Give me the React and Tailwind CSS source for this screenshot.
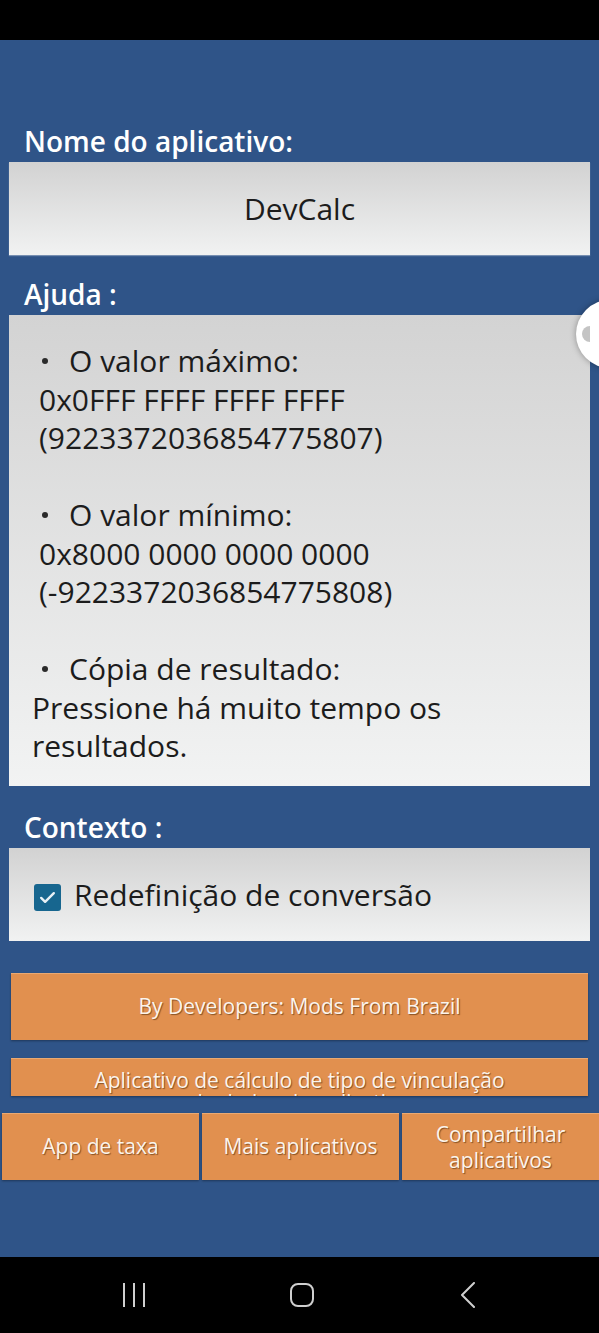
import React from 'react';

const helpBlocks = [
  { title: 'O valor máximo:', lines: ['0x0FFF FFFF FFFF FFFF', '(9223372036854775807)'], indent: true },
  { title: 'O valor mínimo:', lines: ['0x8000 0000 0000 0000', '(-9223372036854775808)'], indent: true },
  { title: 'Cópia de resultado:', lines: ['Pressione há muito tempo os', 'resultados.'], indent: false },
];

function Label({ children, className = '' }) {
  return (
    <div className={`px-[24px] mb-[3px] text-[28px] leading-[36px] font-semibold text-white ${className}`}>
      {children}
    </div>
  );
}

function OrangeButton({ children, className = '' }) {
  return (
    <button
      className={`bg-[#e1904f] text-[#fbf4ec] text-[21px] [text-shadow:1px_1px_1px_rgba(60,30,0,0.55)] shadow-[0_1px_2px_rgba(0,0,0,0.35)] border-t border-[#eaa972] ${className}`}
    >
      {children}
    </button>
  );
}

export default function App() {
  return (
    <div className="relative w-[599px] h-[1333px] overflow-hidden bg-black flex flex-col font-['Open_Sans',sans-serif]">
      {/* status bar */}
      <div className="h-[40px] shrink-0 bg-black" />

      <main className="flex-1 bg-[#2f5488] flex flex-col pt-[83px]">
        <Label>Nome do aplicativo:</Label>
        <div className="mx-[9px] h-[93px] bg-gradient-to-b from-[#d2d2d2] to-[#f1f2f2] flex items-center justify-center text-[30px] font-medium text-[#1c1c1c] shadow-[0_1px_1px_rgba(255,255,255,0.35)]">
          DevCalc
        </div>

        <Label className="mt-[21px]">Ajuda :</Label>
        <div className="mx-[9px] h-[471px] bg-gradient-to-b from-[#d3d3d3] to-[#f2f3f3] pt-[27px] pl-[23px] text-[30px] font-medium leading-[38.5px] text-[#1c1c1c]">
          {helpBlocks.map((block, i) => (
            <div key={block.title} className={i > 0 ? 'mt-[38.5px]' : ''}>
              <div className="flex items-center whitespace-nowrap">
                <span className="ml-[10px] w-[6px] h-[6px] rounded-full bg-[#2a2a2a]" />
                <span className="ml-[21px]">{block.title}</span>
              </div>
              {block.lines.map((line) => (
                <div key={line} className={`whitespace-nowrap ${block.indent ? 'pl-[7px]' : ''}`}>
                  {line}
                </div>
              ))}
            </div>
          ))}
        </div>

        <Label className="mt-[23px]">Contexto :</Label>
        <div className="mx-[9px] h-[93px] bg-gradient-to-b from-[#d2d2d2] to-[#f1f2f2] flex items-center pl-[25px] text-[30px] font-medium text-[#1c1c1c]">
          <span className="w-[27px] h-[27px] rounded-[3px] bg-[#17668f] flex items-center justify-center mt-[6px]">
            <svg width="19" height="19" viewBox="0 0 24 24" fill="none" stroke="#e8f1f6" strokeWidth="3" strokeLinecap="round" strokeLinejoin="round">
              <path d="M4 12.5l5 5L20 6.5" />
            </svg>
          </span>
          <span className="ml-[13px]">Redefinição de conversão</span>
        </div>

        <OrangeButton className="mt-[32px] mx-[11px] h-[67px]">By Developers: Mods From Brazil</OrangeButton>
        <OrangeButton className="mt-[18px] mx-[11px] h-[38px] overflow-hidden leading-[22px] pt-[10px] flex flex-col items-center justify-start">
          <span className="whitespace-nowrap">Aplicativo de cálculo de tipo de vinculação</span>
          <span className="whitespace-nowrap">de dados do aplicativo</span>
        </OrangeButton>

        <div className="mt-[17px] grid grid-cols-3 gap-[3px] pl-[2px]">
          <OrangeButton className="h-[67px]">App de taxa</OrangeButton>
          <OrangeButton className="h-[67px]">Mais aplicativos</OrangeButton>
          <OrangeButton className="h-[67px] leading-[26px]">
            Compartilhar
            <br />
            aplicativos
          </OrangeButton>
        </div>
      </main>

      {/* navigation bar */}
      <nav className="h-[76px] shrink-0 bg-black flex items-center">
        <div className="ml-[123px] flex gap-[8px] h-[24px]">
          <span className="w-[2px] h-[24px] bg-[#cfcfcf]" />
          <span className="w-[2px] h-[24px] bg-[#cfcfcf]" />
          <span className="w-[2px] h-[24px] bg-[#cfcfcf]" />
        </div>
        <div className="ml-[145px] w-[24px] h-[24px] rounded-[8px] border-2 border-[#cfcfcf]" />
        <svg className="ml-[146px]" width="16" height="26" viewBox="0 0 16 26" fill="none" stroke="#cfcfcf" strokeWidth="2" strokeLinecap="round" strokeLinejoin="round">
          <path d="M14 1L2 13l12 12" />
        </svg>
      </nav>

      {/* edge panel handle */}
      <div className="absolute left-[576px] top-[300px] w-[68px] h-[68px] rounded-full bg-white shadow-[0_0_6px_rgba(0,0,0,0.35)]">
        <span className="absolute left-[6px] top-[26px] w-[8px] h-[16px] rounded-l-full bg-[#c4c4c4]" />
      </div>
    </div>
  );
}
